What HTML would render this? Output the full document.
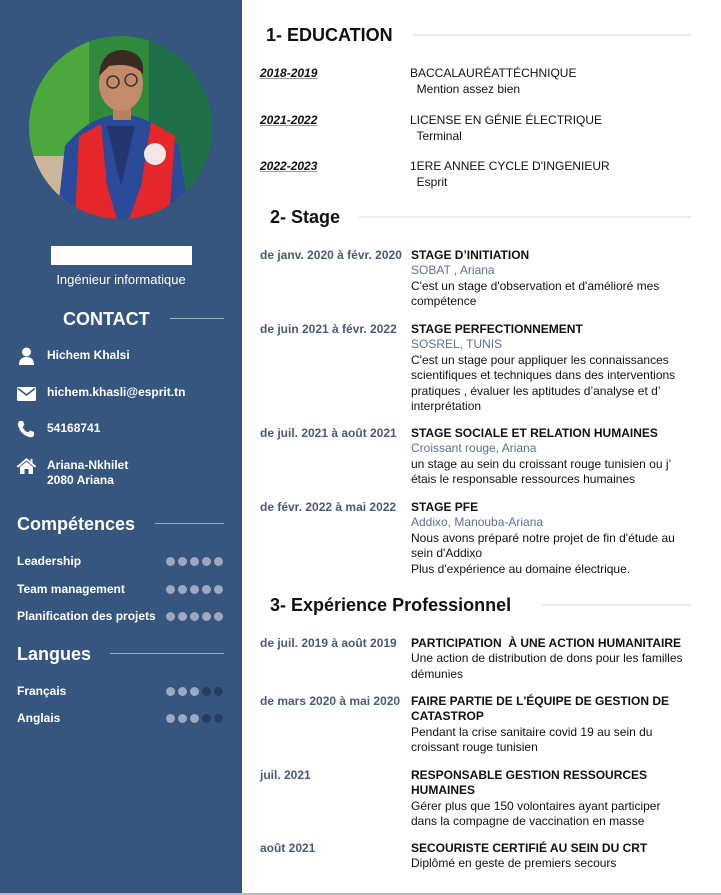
<!DOCTYPE html>
<html><head><meta charset="utf-8"><style>
*{margin:0;padding:0;box-sizing:border-box}
body{width:721px;height:895px;position:relative;background:#fff;font-family:"Liberation Sans",sans-serif;overflow:hidden;color:#111}
.side{position:absolute;left:0;top:0;width:242px;height:893px;background:#36557f;color:#fff}
.bot{position:absolute;left:0;top:893px;width:721px;height:2px;background:#b8b8c4}
.a{position:absolute;white-space:nowrap}
.h{font-weight:bold;font-size:18px}
.ln{position:absolute;height:1px}
.sl{background:#9aaac2}
.ml{background:#ececec;height:2px}
.ct{font-weight:bold;font-size:12px;left:47px}
.sk{font-weight:bold;font-size:12px;left:17px}
.dots{position:absolute;left:166px;display:flex;gap:3px}
.dots i{width:9px;height:9px;border-radius:50%;background:#9da9c0;display:block}
.dots i.d{background:#263e5e}
.e{position:absolute;left:260px;width:440px;font-size:12px;line-height:15.4px}
.e .dt{position:absolute;left:0;top:0;font-weight:bold;color:#4a5a74;white-space:nowrap}
.e .bd{position:absolute;left:151px;top:0;width:280px}
.e .t{font-weight:bold;color:#111}
.e .c{color:#5d6f8f}
.ed{position:absolute;left:260px;font-size:12px;line-height:16px}
.ed .dt{position:absolute;left:0;top:0;font-weight:bold;font-style:italic;text-decoration:underline;text-decoration-color:#999;white-space:nowrap}
.ed .bd{position:absolute;left:150px;top:0;white-space:nowrap}
</style></head><body>
<div class="side">
<svg class="a" style="left:29px;top:36px" width="183" height="183" viewBox="0 0 183 183">
<defs><clipPath id="c"><circle cx="91.5" cy="91.5" r="91.5"/></clipPath></defs>
<g clip-path="url(#c)">
<rect width="183" height="183" fill="#2f8a3c"/>
<rect x="0" y="0" width="60" height="183" fill="#4aa83c"/>
<rect x="120" y="0" width="63" height="183" fill="#1f6f48"/>
<rect x="0" y="120" width="40" height="63" fill="#cbb79a"/>
<path d="M28 183 L36 110 Q60 80 92 78 Q125 80 150 110 L160 183Z" fill="#2a4a9a"/>
<path d="M46 183 L50 100 L72 88 L78 150 L88 183Z" fill="#e5262a"/>
<path d="M140 183 L146 100 L122 86 L112 150 L100 183Z" fill="#e5262a"/>
<path d="M78 90 L92 150 L106 90Z" fill="#25356e"/>
<circle cx="126" cy="118" r="11" fill="#f2e6e6"/>
<rect x="84" y="62" width="18" height="22" fill="#b8805e"/>
<ellipse cx="92" cy="48" rx="22" ry="27" fill="#c48b6a"/>
<path d="M70 40 Q72 14 94 14 Q116 16 114 38 Q104 26 80 30Z" fill="#3a2a20"/>
<circle cx="84" cy="46" r="6" fill="none" stroke="#333" stroke-width="1.5"/>
<circle cx="102" cy="44" r="6" fill="none" stroke="#333" stroke-width="1.5"/>
</g></svg>
<div class="a" style="left:51px;top:246px;width:141px;height:19px;background:#fff"></div>
<div class="a" style="left:0;width:242px;text-align:center;top:272px;font-size:13px">Ingénieur informatique</div>
<div class="a h" style="left:63px;top:309px">CONTACT</div>
<div class="ln sl" style="left:170px;top:318px;width:54px"></div>
<svg class="a" style="left:18px;top:347px" width="17" height="18" viewBox="0 0 17 18"><circle cx="8.5" cy="5" r="4.5" fill="#fff"/><path d="M1 18 Q1 10 8.5 10 Q16 10 16 18Z" fill="#fff"/></svg>
<div class="a ct" style="top:348px">Hichem Khalsi</div>
<svg class="a" style="left:17px;top:387px" width="19" height="14" viewBox="0 0 19 14"><rect x="0" y="0" width="19" height="14" rx="1.5" fill="#fff"/><path d="M1 1.5 L9.5 8 L18 1.5" stroke="#36557f" stroke-width="1.6" fill="none"/></svg>
<div class="a ct" style="top:385px">hichem.khasli@esprit.tn</div>
<svg class="a" style="left:17px;top:420px" width="17" height="18" viewBox="0 0 17 18"><path d="M3 1 L6 1 L7.5 5 L5.5 7 Q7.5 11 11 12.5 L13 10.5 L17 12 L17 15 Q16 18 12 17 Q3 14 1 5 Q1 1 3 1Z" fill="#fff"/></svg>
<div class="a ct" style="top:421px">54168741</div>
<svg class="a" style="left:16px;top:457px" width="21" height="17" viewBox="0 0 21 17"><path d="M10.5 1 L20.5 9.5 L18.8 10.5 L10.5 3.5 L2.2 10.5 L0.5 9.5Z" fill="#fff"/><path d="M4 10 L10.5 4.8 L17 10 L17 17 L12.5 17 L12.5 12 L8.5 12 L8.5 17 L4 17Z" fill="#fff"/><rect x="14.5" y="2" width="2" height="4" fill="#fff"/></svg>
<div class="a ct" style="top:458px;line-height:15px">Ariana-Nkhilet<br>2080 Ariana</div>
<div class="a h" style="left:17px;top:514px">Compétences</div>
<div class="ln sl" style="left:155px;top:523px;width:69px"></div>
<div class="a sk" style="top:554px">Leadership</div><div class="dots" style="top:557px"><i></i><i></i><i></i><i></i><i></i></div>
<div class="a sk" style="top:582px">Team management</div><div class="dots" style="top:585px"><i></i><i></i><i></i><i></i><i></i></div>
<div class="a sk" style="top:609px">Planification des projets</div><div class="dots" style="top:612px"><i></i><i></i><i></i><i></i><i></i></div>
<div class="a h" style="left:17px;top:644px">Langues</div>
<div class="ln sl" style="left:110px;top:653px;width:114px"></div>
<div class="a sk" style="top:684px">Français</div><div class="dots" style="top:687px"><i></i><i></i><i></i><i class="d"></i><i class="d"></i></div>
<div class="a sk" style="top:711px">Anglais</div><div class="dots" style="top:714px"><i></i><i></i><i></i><i class="d"></i><i class="d"></i></div>
</div>
<div class="bot"></div>

<div class="a h" style="left:266px;top:25px">1- EDUCATION</div>
<div class="ln ml" style="left:413px;top:34px;width:278px"></div>
<div class="ed" style="top:65px"><div class="dt">2018-2019</div><div class="bd">BACCALAURÉATTÉCHNIQUE<br>&nbsp; Mention assez bien</div></div>
<div class="ed" style="top:112px"><div class="dt">2021-2022</div><div class="bd">LICENSE EN GÉNIE ÉLECTRIQUE<br>&nbsp; Terminal</div></div>
<div class="ed" style="top:158px"><div class="dt">2022-2023</div><div class="bd">1ERE ANNEE CYCLE D'INGENIEUR<br>&nbsp; Esprit</div></div>

<div class="a h" style="left:270px;top:207px">2- Stage</div>
<div class="ln ml" style="left:359px;top:216px;width:332px"></div>
<div class="e" style="top:248px"><div class="dt">de janv. 2020 à févr. 2020</div><div class="bd"><div class="t">STAGE D’INITIATION</div><div class="c">SOBAT , Ariana</div>C'est un stage d'observation et d'amélioré mes compétence</div></div>
<div class="e" style="top:322px"><div class="dt">de juin 2021 à févr. 2022</div><div class="bd"><div class="t">STAGE PERFECTIONNEMENT</div><div class="c">SOSREL, TUNIS</div>C'est un stage pour appliquer les connaissances scientifiques et techniques dans des interventions pratiques , évaluer les aptitudes d’analyse et d’ interprétation</div></div>
<div class="e" style="top:426px"><div class="dt">de juil. 2021 à août 2021</div><div class="bd"><div class="t">STAGE SOCIALE ET RELATION HUMAINES</div><div class="c">Croissant rouge, Ariana</div>un stage au sein du croissant rouge tunisien ou j’ étais le responsable ressources humaines</div></div>
<div class="e" style="top:500px"><div class="dt">de févr. 2022 à mai 2022</div><div class="bd"><div class="t">STAGE PFE</div><div class="c">Addixo, Manouba-Ariana</div>Nous avons préparé notre projet de fin d'étude au<br>sein d'Addixo<br>Plus d'expérience au domaine électrique.</div></div>

<div class="a h" style="left:270px;top:595px">3- Expérience Professionnel</div>
<div class="ln ml" style="left:542px;top:604px;width:149px"></div>
<div class="e" style="top:636px"><div class="dt">de juil. 2019 à août 2019</div><div class="bd"><div class="t">PARTICIPATION &nbsp;À UNE ACTION HUMANITAIRE</div>Une action de distribution de dons pour les familles démunies</div></div>
<div class="e" style="top:694px"><div class="dt">de mars 2020 à mai 2020</div><div class="bd"><div class="t">FAIRE PARTIE DE L'ÉQUIPE DE GESTION DE CATASTROP</div>Pendant la crise sanitaire covid 19 au sein du<br>croissant rouge tunisien</div></div>
<div class="e" style="top:768px"><div class="dt">juil. 2021</div><div class="bd"><div class="t">RESPONSABLE GESTION RESSOURCES<br>HUMAINES</div>Gérer plus que 150 volontaires ayant participer<br>dans la compagne de vaccination en masse</div></div>
<div class="e" style="top:841px"><div class="dt">août 2021</div><div class="bd"><div class="t">SECOURISTE CERTIFIÉ AU SEIN DU CRT</div>Diplômé en geste de premiers secours</div></div>
</body></html>
